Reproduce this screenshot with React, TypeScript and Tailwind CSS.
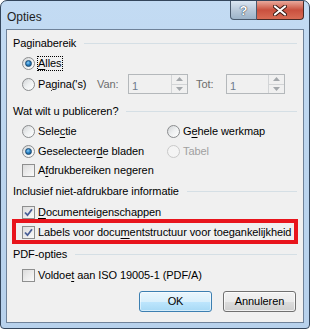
import React from "react";

const font = { fontFamily: "'Liberation Sans', Arial, sans-serif" };

function Radio({ checked = false, disabled = false }: { checked?: boolean; disabled?: boolean }) {
  return (
    <span
      className={
        "flex h-[13px] w-[13px] shrink-0 items-center justify-center rounded-full border " +
        (disabled
          ? "border-[#c9c9c9] bg-[#f4f4f4]"
          : "border-[#8a8c8e] bg-gradient-to-br from-[#d2d4d6] via-[#eef0f1] to-[#ffffff]")
      }
    >
      {checked && (
        <span className="h-[7px] w-[7px] rounded-full border border-[#1b4a72] bg-[radial-gradient(circle_at_40%_35%,#8fd0f8_0%,#2a84c8_45%,#14476f_100%)]" />
      )}
    </span>
  );
}

function Check({ checked = false }: { checked?: boolean }) {
  return (
    <span className="flex h-[13px] w-[13px] shrink-0 items-center justify-center border border-[#8e8f8f] bg-gradient-to-br from-[#dcdcdc] to-[#fbfbfb]">
      {checked && (
        <svg width="9" height="9" viewBox="0 0 9 9">
          <path d="M1 4.5 L3.5 7.2 L8 1.2" fill="none" stroke="#4a5f97" strokeWidth="1.8" />
        </svg>
      )}
    </span>
  );
}

function GroupLabel({ children }: { children: React.ReactNode }) {
  return (
    <div className="flex h-[19px] items-center gap-[8px] pl-[6px] pr-[6px]">
      <span className="whitespace-nowrap">{children}</span>
      <span className="h-px flex-1 bg-[#d5dfe5]" />
    </div>
  );
}

function Spin({ width }: { width: string }) {
  return (
    <div className={"flex h-[20px] border border-[#b4b8bb] bg-[#f0f0f0] " + width}>
      <span className="flex-1 pl-[3px] pt-[3px] text-[#6d7b8d]">1</span>
      <div className="flex w-[16px] flex-col border-l border-[#d2d4d6]">
        <span className="flex flex-1 items-center justify-center border-b border-[#d2d4d6]">
          <svg width="7" height="4" viewBox="0 0 7 4">
            <path d="M0 4 L3.5 0 L7 4 Z" fill="#a3a7ab" />
          </svg>
        </span>
        <span className="flex flex-1 items-center justify-center">
          <svg width="7" height="4" viewBox="0 0 7 4">
            <path d="M0 0 L3.5 4 L7 0 Z" fill="#a3a7ab" />
          </svg>
        </span>
      </div>
    </div>
  );
}

export default function App() {
  return (
    <div
      className="flex h-[329px] w-[310px] flex-col overflow-hidden rounded-t-[7px] rounded-b-[4px] border border-[#34465c] bg-gradient-to-b from-[#c3dbf3] via-[#bcd5ee] to-[#b7d1ec] text-[11px] tracking-[-0.08px] text-black"
      style={font}
    >
      {/* TITLE BAR */}
      <div className="flex h-[28px] shrink-0 items-start justify-between">
        <span className="pl-[6px] pt-[9px] text-[12px] leading-[14px] tracking-normal text-[#1e1e1e]">Opties</span>
        <div className="mr-[5px] flex h-[19px]">
          <div className="flex w-[27px] items-center justify-center rounded-bl-[4px] border border-t-0 border-[#4a5a6e] bg-gradient-to-b from-[#dbe6f2] via-[#b9c9da] to-[#9db3c9]">
            <span className="text-[13px] font-bold leading-none text-white [text-shadow:0_0_1px_#1f2c3a,0_0_1px_#1f2c3a]">?</span>
          </div>
          <div className="flex w-[47px] items-center justify-center rounded-br-[4px] border border-l-0 border-t-0 border-[#4a2a25] bg-gradient-to-b from-[#e9a99c] via-[#c9503e] to-[#d86c55]">
            <svg width="14" height="11" viewBox="0 0 14 11">
              <path d="M2 1.5 L12 9.5 M12 1.5 L2 9.5" stroke="#3a1a14" strokeWidth="4" strokeLinecap="round" />
              <path d="M2 1.5 L12 9.5 M12 1.5 L2 9.5" stroke="#ffffff" strokeWidth="2.2" strokeLinecap="round" />
            </svg>
          </div>
        </div>
      </div>

      {/* CLIENT AREA */}
      <div className="mx-[5px] mb-[5px] flex flex-1 flex-col border border-[#6f8299] bg-[#f0f0f0] pt-[4px]">
        <GroupLabel>Paginabereik</GroupLabel>

        <div className="flex h-[20px] items-center gap-[2px] pl-[15px]">
          <Radio checked />
          <span className="border border-dotted border-black pr-[1px] leading-[13px]">
            <span className="underline underline-offset-2">A</span>lles
          </span>
        </div>

        <div className="mt-[1px] flex h-[20px] items-center pl-[15px]">
          <Radio />
          <span className="ml-[3px] w-[59px]">
            Pa<span className="underline underline-offset-2">g</span>ina('s)
          </span>
          <span className="w-[31px] text-[#6d6d6d]">Van:</span>
          <Spin width="w-[60px]" />
          <span className="ml-[8px] w-[30px] text-[#6d6d6d]">Tot:</span>
          <Spin width="w-[59px]" />
        </div>

        <div className="mt-[8px]">
          <GroupLabel>Wat wilt u publiceren?</GroupLabel>
        </div>

        <div className="grid grid-cols-[145px_1fr] pl-[15px]">
          <div className="flex h-[20px] items-center gap-[3px]">
            <Radio />
            <span>
              Sele<span className="underline underline-offset-2">c</span>tie
            </span>
          </div>
          <div className="flex h-[20px] items-center gap-[3px]">
            <Radio />
            <span>
              G<span className="underline underline-offset-2">e</span>hele werkmap
            </span>
          </div>
          <div className="flex h-[20px] items-center gap-[3px]">
            <Radio checked />
            <span>
              Geselecteer<span className="underline underline-offset-2">d</span>e bladen
            </span>
          </div>
          <div className="flex h-[20px] items-center gap-[3px]">
            <Radio disabled />
            <span className="text-[#a0a0a0]">Tabel</span>
          </div>
        </div>

        <div className="flex h-[19px] items-center gap-[3px] pl-[15px]">
          <Check />
          <span>
            A<span className="underline underline-offset-2">f</span>drukbereiken negeren
          </span>
        </div>

        <div className="mt-[2px]">
          <GroupLabel>Inclusief niet-afdrukbare informatie</GroupLabel>
        </div>

        <div className="mt-[1px] flex h-[20px] items-center gap-[3px] pl-[15px]">
          <Check checked />
          <span>
            <span className="underline underline-offset-2">D</span>ocumenteigenschappen
          </span>
        </div>

        <div className="relative flex h-[20px] items-center gap-[3px] pl-[15px]">
          <Check checked />
          <span className="whitespace-nowrap">
            Labels voor docu<span className="underline underline-offset-2">m</span>entstructuur voor toegankelijkheid
          </span>
          <span className="pointer-events-none absolute -top-[3px] -bottom-[2px] left-[5px] right-[5px] border-[4px] border-[#e8141c]" />
        </div>

        <div className="mt-[3px]">
          <GroupLabel>PDF-opties</GroupLabel>
        </div>

        <div className="mt-[1px] flex h-[20px] items-center gap-[3px] pl-[15px]">
          <Check />
          <span>
            Voldoe<span className="underline underline-offset-2">t</span> aan ISO 19005-1 (PDF/A)
          </span>
        </div>

        {/* BUTTONS */}
        <div className="mt-[6px] flex justify-end gap-[11px] pr-[7px]">
          <button className="h-[21px] w-[73px] rounded-[3px] border border-[#3c7fb1] bg-[linear-gradient(to_bottom,#eaf6fd_0%,#d9f0fc_50%,#bee6fd_51%,#a7d9f5_100%)] shadow-[inset_0_0_0_1px_#ffffff80] text-[11px] text-black">
            OK
          </button>
          <button className="h-[21px] w-[73px] rounded-[3px] border border-[#707070] bg-[linear-gradient(to_bottom,#f2f2f2_0%,#ebebeb_50%,#dddddd_51%,#cfcfcf_100%)] shadow-[inset_0_0_0_1px_#ffffffb0] text-[11px] text-black">
            Annuleren
          </button>
        </div>
      </div>
    </div>
  );
}
